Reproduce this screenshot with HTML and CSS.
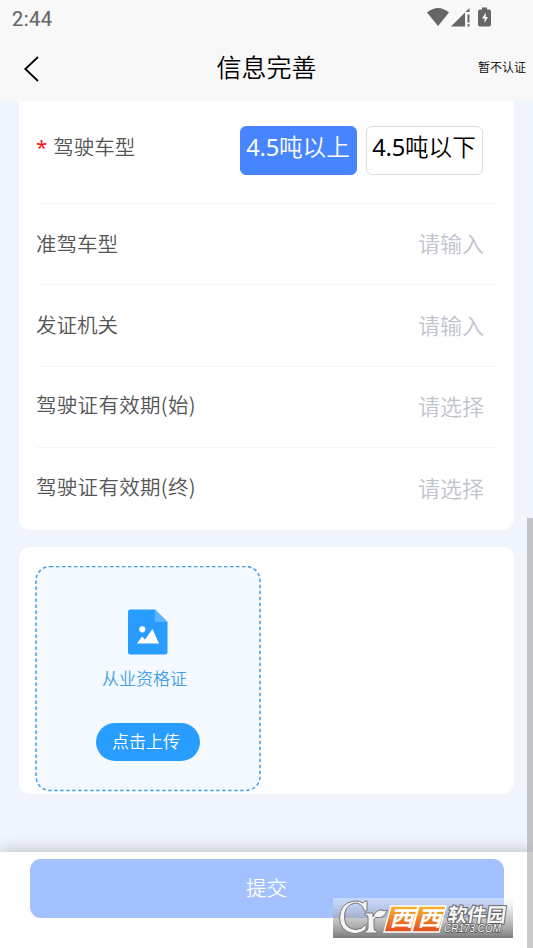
FILE: index.html
```html
<!DOCTYPE html>
<html lang="zh-CN">
<head>
<meta charset="utf-8">
<title>信息完善</title>
<link rel="stylesheet" href="styles.css">
</head>
<body>
<div class="screen">
  <header class="top">
    <div class="status">
      <span class="time">2:44</span>
      <svg class="status-icons" width="68" height="24" viewBox="0 0 68 24" fill="#666">
        <path d="M1 6.500Q12 -2.500 23 6.500L12 20Z"/>
        <path d="M25 20.500L43.500 2V6H39V20.500ZM41.500 8.500h2v8h-2zM41.500 18.200h2v2.300h-2z"/>
        <path fill-rule="evenodd" d="M56 1.500h5v2h2q2 0 2 2v13q0 2-2 2h-9q-2 0-2-2v-13q0-2 2-2h2zM59.700 6.500l-3.700 6h2.500v4.500l3.500-6h-2.300z"/>
      </svg>
    </div>
    <nav class="nav">
      <svg class="back" width="16" height="26" viewBox="0 0 16 26" fill="none" stroke="#000" stroke-width="1.8"><path d="M14 1L1.300 13L14 25"/></svg>
      <h1>信息完善</h1>
      <span class="skip">暂不认证</span>
    </nav>
  </header>
  <main class="content">
    <section class="card form">
      <div class="row types">
        <div class="label"><i>*</i>驾驶车型</div>
        <div class="choices"><button class="choice on"><b>4.5</b>吨以上</button><button class="choice"><b>4.5</b>吨以下</button></div>
      </div>
      <div class="row"><div class="label">准驾车型</div><div class="hint">请输入</div></div>
      <div class="row"><div class="label">发证机关</div><div class="hint">请输入</div></div>
      <div class="row date"><div class="label">驾驶证有效期(始)</div><div class="hint">请选择</div></div>
      <div class="row date"><div class="label">驾驶证有效期(终)</div><div class="hint">请选择</div></div>
    </section>
    <section class="card uploads">
      <div class="upload">
        <svg class="frame" width="226" height="226" viewBox="0 0 226 226"><rect x="1" y=".5" width="224" height="224" rx="14" fill="#f3f9ff" stroke="#439fe0" stroke-width="1.500" stroke-dasharray="3.500 2.500"/></svg>
        <svg class="file" width="40" height="46" viewBox="0 0 40 46">
          <path fill="#289dff" d="M2.500 .5H27L39.500 13V43q0 2.500-2.500 2.500H2.500Q0 45.500 0 43V3Q0 .5 2.500 .5Z"/>
          <path fill="#5bb5ff" d="M27 .5L39.500 13H29Q26.500 13 26.500 10.500Z"/>
          <circle cx="14.300" cy="20.300" r="3.100" fill="#fff"/>
          <path fill="#fff" d="M9 34.500L14 27.500L17 30.500L24.500 20L31 34.500Z"/>
        </svg>
        <div class="upload-name">从业资格证</div>
        <button class="upload-btn">点击上传</button>
      </div>
    </section>
  </main>
  <footer class="footer"><button class="submit">提交</button></footer>
  <div class="scrollbar"></div>
  <svg class="mark" width="180" height="40" viewBox="0 0 180 40">
    <defs>
      <linearGradient id="shade" x2="0" y2="1"><stop offset="0" stop-color="#fff" stop-opacity=".4"/><stop offset=".45" stop-color="#aaa" stop-opacity=".55"/><stop offset="1" stop-color="#747474" stop-opacity=".95"/></linearGradient>
      <linearGradient id="orange" x2="0" y2="1"><stop offset="0" stop-color="#f5b52c"/><stop offset="1" stop-color="#e64c20"/></linearGradient>
    </defs>
    <rect width="180" height="40" fill="url(#shade)"/>
    <g class="mark-c">
      <path d="M34 13H31.500Q29 5 22 5Q11 7 11.500 20Q12 31 23 31.500Q29 31.500 33 26V31Q28 36 20 35.500Q7 33 6.500 20Q7 5 21 3Q27 2.500 30 5L32 3H34Z"/>
      <path d="M32 15H40V19Q43 12 48 12Q52 13.500 54.500 12Q51 21 43 19.500Q41 20 41 22V30Q41 33 44 33V35H32V33Q35 33 35 30V19Q35 17 32 17Z"/>
    </g>
    <g stroke="#fff" stroke-width="1.300" fill="url(#orange)"><path d="M58 8H85L78 34H51Z"/><path d="M86 8H113L106 34H79Z"/></g>
    <g class="mark-xx"><text transform="translate(56.500 28) skewX(-15) scale(1.150 1)">西</text><text transform="translate(84.500 28) skewX(-15) scale(1.150 1)">西</text></g>
    <text class="mark-name" transform="translate(114 23.500) skewX(-8)" textLength="58" lengthAdjust="spacingAndGlyphs">软件园</text>
    <text class="mark-site" x="111" y="34" textLength="57" lengthAdjust="spacingAndGlyphs">CR173.COM</text>
  </svg>
</div>
</body>
</html>
```
FILE: styles.css
```css
* { box-sizing: border-box; }
body { margin: 0; font-family: "Noto Sans", "Noto Sans CJK SC", sans-serif; font-weight: 350; }
button { font: inherit; border: 0; padding: 0; }
.screen { position: relative; width: 533px; height: 948px; display: flex; flex-direction: column; overflow: hidden; background: #f0f4fd; }
.top { height: 101px; background: #f8f8f8; flex: none; }
.status { height: 36px; display: flex; justify-content: space-between; padding: 6px 39px 0 12px; }
.time { font: 400 20px/26px Roboto, sans-serif; color: #666; letter-spacing: .5px; -webkit-text-stroke: .2px #666; }
.nav { height: 64px; display: grid; grid-template-columns: 1fr auto 1fr; align-items: center; padding: 0 7px 0 24px; }
.nav h1 { margin: 0 0 2px -17px; font-size: 25px; font-weight: inherit; line-height: 36px; color: #000; }
.back { margin-top: 1px; }
.skip { justify-self: end; font-size: 12px; line-height: 20px; color: #000; }
.content { flex: 1; padding: 0 19px; }
.card { background: #fff; padding: 0 17px; }
.form { height: 428.5px; border-radius: 0 0 11px 11px; }
.row { height: 81.5px; display: flex; align-items: center; justify-content: space-between; padding-right: 13px; border-bottom: 1.5px solid #f6f6f7; }
.row:last-child { border-bottom: 0; }
.types { height: 102.5px; align-items: flex-start; padding: 25px 14px 0 0; }
.label { font-size: 20.5px; line-height: 30px; color: #555; }
.types .label { margin-top: 6px; }
.label i { color: #f01818; font-style: normal; font-weight: 400; margin-right: 6px; }
.date .label { margin-bottom: 5px; font-family: "Noto Sans CJK SC", sans-serif; letter-spacing: .3px; }
.hint { font-size: 22px; line-height: 32px; color: #c0c4cc; margin-bottom: 1px; }
.date .hint { margin-bottom: 1px; }
.choices { display: flex; gap: 9px; }
.choice { width: 117px; height: 49px; border: 1.5px solid #dcdcdc; border-radius: 6px; background: #fff; color: #000; font-size: 23.6px; line-height: 34px; padding: 0 1px 8px 0; white-space: nowrap; }
.choice b { font-weight: 400; letter-spacing: -.2px; }
.choice.on { background: #4784ff; border-color: #4784ff; color: #fff; }
.uploads { height: 247px; margin-top: 17.5px; padding-top: 19px; border-radius: 11px; }
.upload { position: relative; width: 226px; height: 226px; margin-left: -1px; display: flex; flex-direction: column; align-items: center; padding-top: 43px; }
.frame { position: absolute; inset: 0; }
.file { position: relative; flex: none; }
.upload-name { position: relative; margin: 10px 7px 0 0; font-size: 17px; line-height: 28px; color: #439fe8; }
.upload-btn { position: relative; width: 104px; height: 38px; margin-top: 30px; padding: 0 4px 4px 0; border-radius: 19px; background: #289dff; color: #fff; font-size: 17px; }
.footer { height: 96px; flex: none; background: #fff; padding: 7px 29.5px; box-shadow: 0 0 16px rgba(0, 0, 0, .25); }
.submit { display: block; width: 474px; height: 59px; padding-bottom: 4px; border-radius: 11px; background: #a3c0ff; color: #fff; font-size: 20.5px; }
.scrollbar { position: absolute; right: 0; top: 518px; bottom: 0; width: 6px; background: rgba(150, 150, 150, .5); }
.mark { position: absolute; left: 333px; top: 898px; }
.mark-c { fill: #f4f4f4; stroke: #777; stroke-width: 1px; }
.mark text { font-family: "Noto Sans CJK SC", sans-serif; font-weight: 700; }
.mark-xx text { font-size: 21px; fill: #fff; }
.mark .mark-name { font-size: 19.5px; fill: #f7f7f7; stroke: #666; stroke-width: 2px; paint-order: stroke; }
.mark .mark-site { font: italic 10.5px "Liberation Sans", sans-serif; fill: #fff; stroke: #555; stroke-width: 1.5px; paint-order: stroke; }
```
